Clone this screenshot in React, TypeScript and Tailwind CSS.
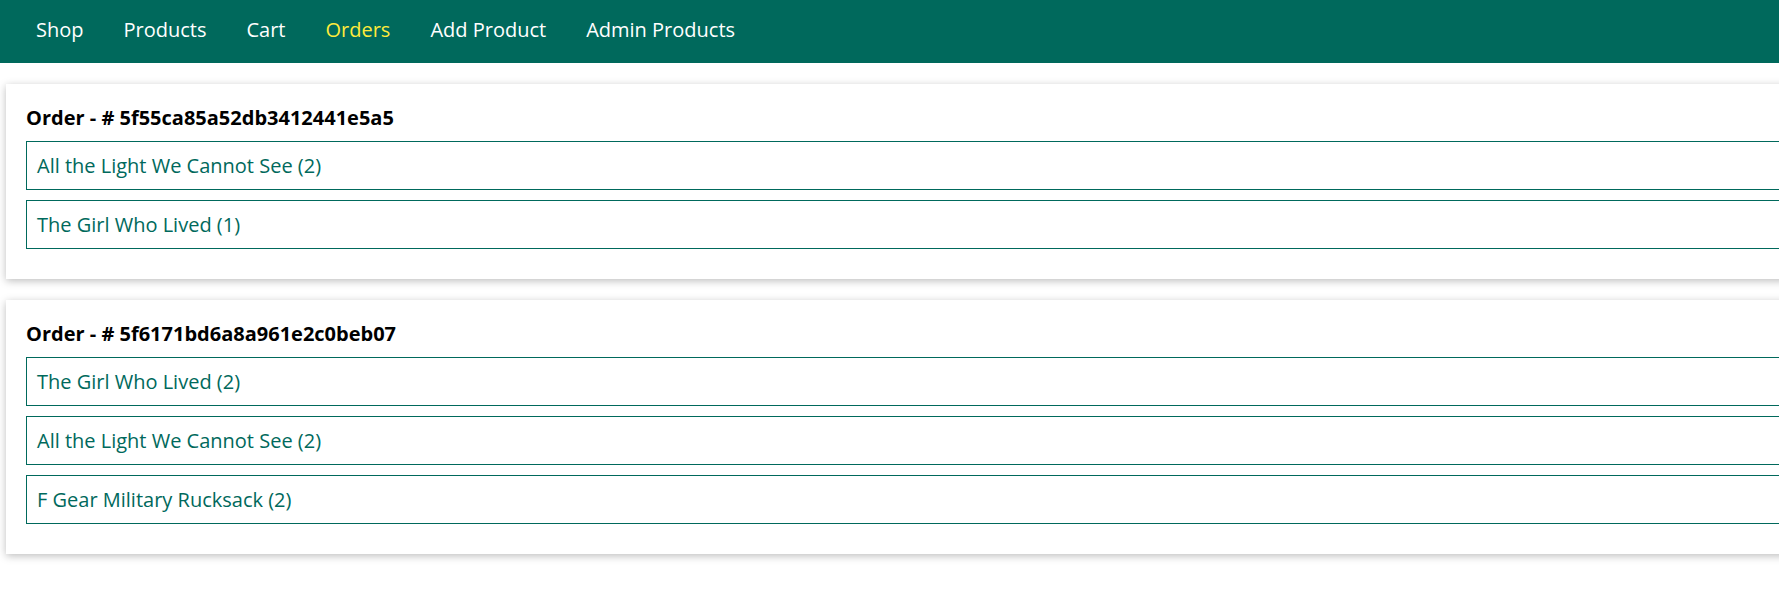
import React from "react";

type OrderItem = { title: string; quantity: number };
type Order = { id: string; items: OrderItem[] };

const NAV = ["Shop", "Products", "Cart", "Orders", "Add Product", "Admin Products"];

const ORDERS: Order[] = [
  {
    id: "5f55ca85a52db3412441e5a5",
    items: [
      { title: "All the Light We Cannot See", quantity: 2 },
      { title: "The Girl Who Lived", quantity: 1 },
    ],
  },
  {
    id: "5f6171bd6a8a961e2c0beb07",
    items: [
      { title: "The Girl Who Lived", quantity: 2 },
      { title: "All the Light We Cannot See", quantity: 2 },
      { title: "F Gear Military Rucksack", quantity: 2 },
    ],
  },
];

export default function App() {
  return (
    <div className="min-h-screen w-full overflow-hidden bg-white font-['Open_Sans',sans-serif]">
      {/* MAIN HEADER */}
      <header className="h-[63px] w-full bg-[#00695c] px-[36px] pt-[16px]">
        <nav>
          <ul className="flex gap-[40px] text-[20px] leading-[27px]">
            {NAV.map((label) => (
              <li key={label}>
                <a
                  href="#"
                  className={label === "Orders" ? "text-[#ffeb3b]" : "text-white"}
                >
                  {label}
                </a>
              </li>
            ))}
          </ul>
        </nav>
      </header>

      {/* ORDERS */}
      <main className="flex flex-col gap-[21px] pt-[21px] pl-[6px]">
        {ORDERS.map((order) => (
          <div
            key={order.id}
            className="w-[1800px] bg-white px-[20px] pt-[20px] pb-[20px] shadow-[0_2px_8px_rgba(0,0,0,0.26)]"
          >
            <h1 className="mb-[10px] text-[20px] font-bold leading-[27px] text-black">
              Order - # {order.id}
            </h1>
            <ul>
              {order.items.map((item, i) => (
                <li
                  key={i}
                  className="mb-[10px] border border-[#00695c] px-[10px] py-[10px] text-[20px] leading-[27px] text-[#00695c]"
                >
                  {item.title} ({item.quantity})
                </li>
              ))}
            </ul>
          </div>
        ))}
      </main>
    </div>
  );
}
